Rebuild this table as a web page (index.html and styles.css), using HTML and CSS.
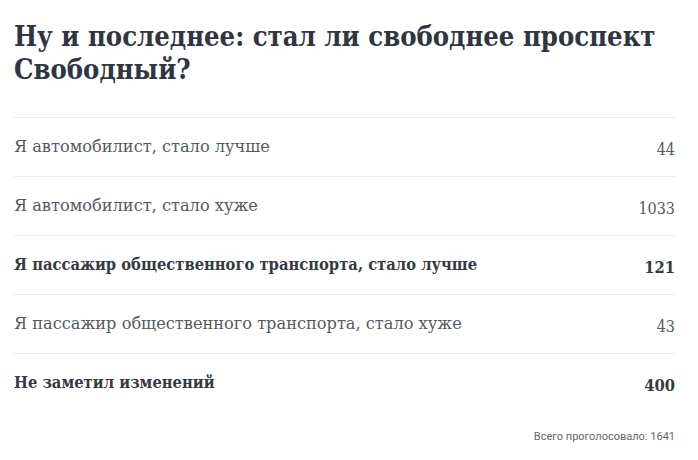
FILE: index.html
```html
<!DOCTYPE html>
<html lang="ru">
<head>
<meta charset="utf-8">
<link rel="stylesheet" href="styles.css">
</head>
<body>
<div class="poll">
  <h2 class="poll-title">Ну и последнее: стал ли свободнее проспект Свободный?</h2>
  <ul class="poll-list">
    <li class="poll-row"><span class="label">Я автомобилист, стало лучше</span><span class="count">44</span></li>
    <li class="poll-row"><span class="label">Я автомобилист, стало хуже</span><span class="count">1033</span></li>
    <li class="poll-row strong"><span class="label">Я пассажир общественного транспорта, стало лучше</span><span class="count">121</span></li>
    <li class="poll-row"><span class="label">Я пассажир общественного транспорта, стало хуже</span><span class="count">43</span></li>
    <li class="poll-row strong"><span class="label">Не заметил изменений</span><span class="count">400</span></li>
  </ul>
  <div class="poll-total">Всего проголосовало: 1641</div>
</div>
</body>
</html>
```
FILE: styles.css
```css
html, body { margin: 0; padding: 0; background: #fff; }
.poll { padding: 20px 23px 0 14px; font-family: "DejaVu Serif Condensed", "DejaVu Serif", serif; }
.poll-title { margin: 0 0 31px 0; font-size: 27.2px; line-height: 33px; font-weight: 700; color: #2f3641; }
.poll-list { list-style: none; margin: 0; padding: 0; }
.poll-row { display: flex; justify-content: space-between; align-items: flex-start; border-top: 1px solid #ececec; height: 58px; font-size: 16px; color: #555a60; line-height: 58px; }
.poll-row .label { font-family: "DejaVu Serif", serif; font-size: 16.2px; }
.poll-row .count { margin-top: 3px; }
.poll-row.strong { font-weight: 700; color: #353a42; font-size: 16.4px; }
.poll-row.strong .label { font-family: "DejaVu Serif Condensed", "DejaVu Serif", serif; font-size: 16.4px; }
.poll-total { text-align: right; font-family: Roboto, sans-serif; font-size: 11px; color: #666; margin-top: 18px; }
```
